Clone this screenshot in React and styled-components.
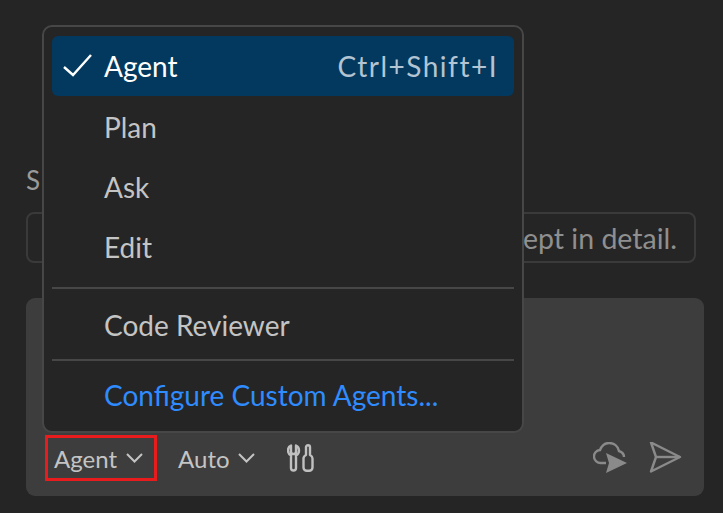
import styled, { createGlobalStyle } from "styled-components";

const GlobalStyle = createGlobalStyle`
  html, body {
    margin: 0;
    height: 100%;
    background: #252525;
  }
`;

const Page = styled.div`
  position: relative;
  box-sizing: border-box;
  width: 723px;
  height: 513px;
  overflow: hidden;
  padding: 167px 19px 17px 26px;
  background: #252525;
  font-family: Lato, "Noto Sans", sans-serif;
  font-size: 28px;
  color: #cccccc;
`;

const SectionLabel = styled.div`
  height: 26px;
  line-height: 26px;
  margin-bottom: 19px;
  color: #9a9a9a;
  font-size: 26px;
  letter-spacing: 4px;
`;

const Suggestion = styled.div`
  box-sizing: border-box;
  display: flex;
  justify-content: flex-end;
  align-items: center;
  width: 670px;
  height: 51px;
  padding: 0 17px;
  margin-bottom: 35px;
  border: 2px solid #3a3a3a;
  border-radius: 8px;
  color: #8f8f8f;
  font-size: 28.5px;
  white-space: nowrap;
`;

const Composer = styled.div`
  box-sizing: border-box;
  display: flex;
  align-items: flex-end;
  justify-content: space-between;
  height: 198px;
  padding: 0 22px 15px 19px;
  border-radius: 9px;
  background: #3d3d3d;
`;

const Toolbar = styled.div`
  display: flex;
  align-items: center;
`;

const Picker = styled.div`
  box-sizing: border-box;
  display: flex;
  align-items: center;
  gap: ${(p) => (p.$outlined ? 9 : 8)}px;
  height: 46px;
  padding: 0 ${(p) => (p.$outlined ? "11px" : "0")} 0 ${(p) => (p.$outlined ? "6px" : "0")};
  border: 3px solid ${(p) => (p.$outlined ? "#e81c1c" : "transparent")};
  margin-right: ${(p) => p.$gap || 0}px;
  color: #c4c4c4;
  font-size: 24px;
`;

const IconGroup = styled.div`
  display: flex;
  align-items: center;
  gap: 21px;
  height: 46px;
`;

const Menu = styled.div`
  position: absolute;
  top: 25px;
  left: 42px;
  box-sizing: border-box;
  width: 482px;
  height: 408px;
  padding: 9px 8px;
  border: 2px solid #474747;
  border-radius: 10px;
  background: #252525;
`;

const MenuItem = styled.div`
  box-sizing: border-box;
  display: flex;
  align-items: center;
  height: ${(p) => p.$height || 60}px;
  padding: 0 16px 0 11px;
  border-radius: 6px;
  background: ${(p) => (p.$active ? "#03395e" : "transparent")};
  color: ${(p) => (p.$active ? "#ffffff" : p.$link ? "#2f8cff" : "#c4c4c4")};
`;

const CheckSlot = styled.span`
  display: flex;
  width: 41px;
  flex-shrink: 0;
`;

const ItemLabel = styled.span`
  flex: 1;
`;

const Shortcut = styled.span`
  color: #b3c4d2;
  letter-spacing: 1.5px;
`;

const Separator = styled.div`
  height: 2px;
  margin: ${(p) => p.$margin};
  background: #474747;
`;

const Check = () => (
  <svg width="30" height="24" viewBox="0 0 30 24" fill="none" stroke="#fff" strokeWidth="2.4">
    <path d="M1 13l9 8L28 1" />
  </svg>
);

const Chevron = () => (
  <svg width="17" height="10" viewBox="0 0 17 10" fill="none" stroke="#c4c4c4" strokeWidth="2">
    <path d="M1 1l7.500 7.500L16 1" />
  </svg>
);

const Tools = () => (
  <svg width="28" height="28" viewBox="0 0 28 28" fill="none" stroke="#c0c0c0" strokeWidth="2.4" strokeLinejoin="round">
    <path d="M3.500 1.500v6a2.500 2.500 0 0 0 5 0v-6c2 .8 3 2.800 3 5s-1.200 4-3 5v12.500a2.500 2.500 0 0 1-5 0V11.500c-1.800-1-3-2.800-3-5s1-4.200 3-5z" transform="translate(.5 0)" />
    <path d="M21 1.200a2 2 0 0 1 2 2V11c1.500.8 2.500 1.800 2.500 3.500v9a3.300 3.300 0 0 1-3.300 3.300h-2.400a3.300 3.300 0 0 1-3.300-3.300v-9c0-1.700 1-2.700 2.500-3.500V3.200a2 2 0 0 1 2-2z" />
  </svg>
);

const CloudSend = () => (
  <svg width="35" height="32" viewBox="0 0 35 32" fill="none">
    <path d="M13 21H8a6.500 6.500 0 0 1-1-13C9 3 12 1 16 1c5 0 9 3 10 8 3 1 5 3 5 6" stroke="#8a8a8a" strokeWidth="2.4" />
    <path d="M13 11l21 10-21 10 3-10z" fill="#8a8a8a" />
  </svg>
);

const Send = () => (
  <svg width="33" height="32" viewBox="0 0 33 32" fill="none" stroke="#8a8a8a" strokeWidth="2.4" strokeLinejoin="round">
    <path d="M2 .5L31 15 2 29.500 7 15z" />
    <path d="M7 15h24" />
  </svg>
);

export default function App() {
  return (
    <>
      <GlobalStyle />
      <Page>
        <SectionLabel>Suggested</SectionLabel>
        <Suggestion>Explain this concept in detail.</Suggestion>
        <Composer>
          <Toolbar>
            <Picker $outlined $gap={18}>
              Agent
              <Chevron />
            </Picker>
            <Picker $gap={29}>
              Auto
              <Chevron />
            </Picker>
            <Tools />
          </Toolbar>
          <IconGroup>
            <CloudSend />
            <Send />
          </IconGroup>
        </Composer>
        <Menu>
          <MenuItem $active>
            <CheckSlot>
              <Check />
            </CheckSlot>
            <ItemLabel>Agent</ItemLabel>
            <Shortcut>Ctrl+Shift+I</Shortcut>
          </MenuItem>
          <MenuItem $height={61}>
            <CheckSlot />
            <ItemLabel>Plan</ItemLabel>
          </MenuItem>
          <MenuItem>
            <CheckSlot />
            <ItemLabel>Ask</ItemLabel>
          </MenuItem>
          <MenuItem>
            <CheckSlot />
            <ItemLabel>Edit</ItemLabel>
          </MenuItem>
          <Separator $margin="10px 0 7px" />
          <MenuItem $height={58}>
            <CheckSlot />
            <ItemLabel>Code Reviewer</ItemLabel>
          </MenuItem>
          <Separator $margin="5px 0 4px" />
          <MenuItem $link>
            <CheckSlot />
            <ItemLabel>Configure Custom Agents...</ItemLabel>
          </MenuItem>
        </Menu>
      </Page>
    </>
  );
}
